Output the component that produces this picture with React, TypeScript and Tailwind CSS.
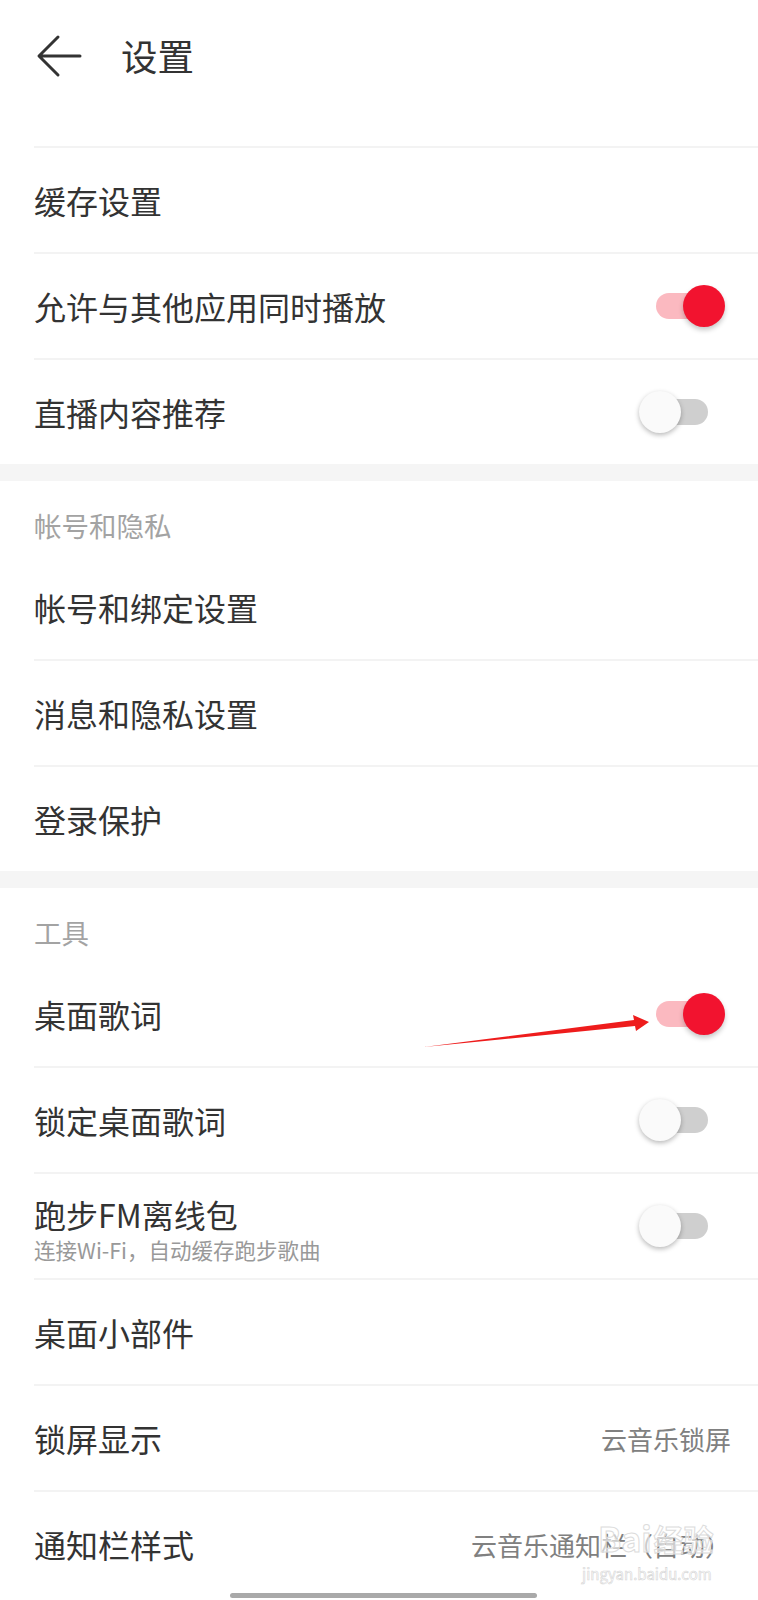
import React from 'react';

const FONT = { fontFamily: '"Noto Sans CJK SC", "Noto Sans", sans-serif' };

function Toggle({ on }: { on: boolean }) {
  return (
    <div className="relative w-[86px] h-[44px] shrink-0">
      <div
        className={`absolute left-[17px] top-[9px] w-[52px] h-[26px] rounded-full ${
          on ? 'bg-[#fbb9c0]' : 'bg-[#cfcfcf]'
        }`}
      />
      <div
        className={`absolute top-[1px] w-[42px] h-[42px] rounded-full ${
          on
            ? 'right-0 bg-[#f2132f] shadow-[0_3px_5px_rgba(0,0,0,0.22)]'
            : 'left-0 bg-[#fafafa] shadow-[0_2px_5px_rgba(0,0,0,0.28)]'
        }`}
      />
    </div>
  );
}

function Divider() {
  return <div className="ml-[34px] h-[2px] bg-[#f3f3f3]" />;
}

function Band() {
  return <div className="h-[17px] bg-[#f5f5f5]" />;
}

interface RowProps {
  title: string;
  sub?: string;
  toggle?: boolean;
  value?: string;
}

function Row({ title, sub, toggle, value }: RowProps) {
  return (
    <div className="h-[104px] flex items-center pl-[34px] pr-[33px]">
      <div className={`flex-1 flex flex-col ${sub ? 'pt-[6px] gap-[2px]' : ''}`}>
        <span className="text-[32px] leading-[40px] text-[#333333]">{title}</span>
        {sub && <span className="text-[21.5px] leading-[28px] text-[#999999]">{sub}</span>}
      </div>
      {toggle !== undefined && <Toggle on={toggle} />}
      {value && <span className="text-[26px] text-[#808080] mr-[-6px]">{value}</span>}
    </div>
  );
}

function SectionHeader({ label }: { label: string }) {
  return (
    <div className="h-[74px] pl-[34px] pt-[29px]">
      <span className="block text-[27.5px] leading-[30px] text-[#a3a3a3]">{label}</span>
    </div>
  );
}

export default function App() {
  return (
    <div className="relative w-full min-h-[1600px] bg-white overflow-hidden" style={FONT}>
      {/* 顶部标题栏 */}
      <div className="h-[146px] flex items-start pt-[32px] pl-[36px]">
        <svg width="48" height="44" viewBox="0 0 48 44" className="mt-[2px]">
          <path d="M44 22H4M22 3L3 22l19 19" fill="none" stroke="#333" strokeWidth="3" strokeLinecap="round" strokeLinejoin="round" />
        </svg>
        <span className="ml-[37px] text-[36.5px] leading-[48px] text-[#333333]">设置</span>
      </div>
      <Divider />
      <Row title="缓存设置" />
      <Divider />
      <Row title="允许与其他应用同时播放" toggle={true} />
      <Divider />
      <Row title="直播内容推荐" toggle={false} />
      <Band />

      <SectionHeader label="帐号和隐私" />
      <Row title="帐号和绑定设置" />
      <Divider />
      <Row title="消息和隐私设置" />
      <Divider />
      <Row title="登录保护" />
      <Band />

      <SectionHeader label="工具" />
      <Row title="桌面歌词" toggle={true} />
      <Divider />
      <Row title="锁定桌面歌词" toggle={false} />
      <Divider />
      <Row title="跑步FM离线包" sub="连接Wi-Fi，自动缓存跑步歌曲" toggle={false} />
      <Divider />
      <Row title="桌面小部件" />
      <Divider />
      <Row title="锁屏显示" value="云音乐锁屏" />
      <Divider />
      <Row title="通知栏样式" value="云音乐通知栏（自动）" />

      {/* 红色标注箭头 */}
      <svg className="absolute left-0 top-0 pointer-events-none" width="758" height="1600">
        <polygon points="424,1047 634,1020 633,1015 649,1022 636,1031 635,1026" fill="#ee1c1c" />
      </svg>

      {/* 水印 */}
      <div className="absolute left-[598px] top-[1518px] flex items-end gap-[2px] text-[34px] leading-[40px] font-bold text-white/60 [-webkit-text-stroke:1px_#dcdcdc] pointer-events-none">
        <span>Bai</span>
        <span className="text-[30px]">经验</span>
      </div>
      <div className="absolute left-[582px] top-[1565px] text-[15px] leading-[18px] text-white [-webkit-text-stroke:0.6px_#d5d5d5] pointer-events-none">
        jingyan.baidu.com
      </div>

      {/* 底部横条 */}
      <div className="absolute left-[230px] top-[1593px] w-[307px] h-[5px] rounded-full bg-[#a9a9a9]" />
    </div>
  );
}
